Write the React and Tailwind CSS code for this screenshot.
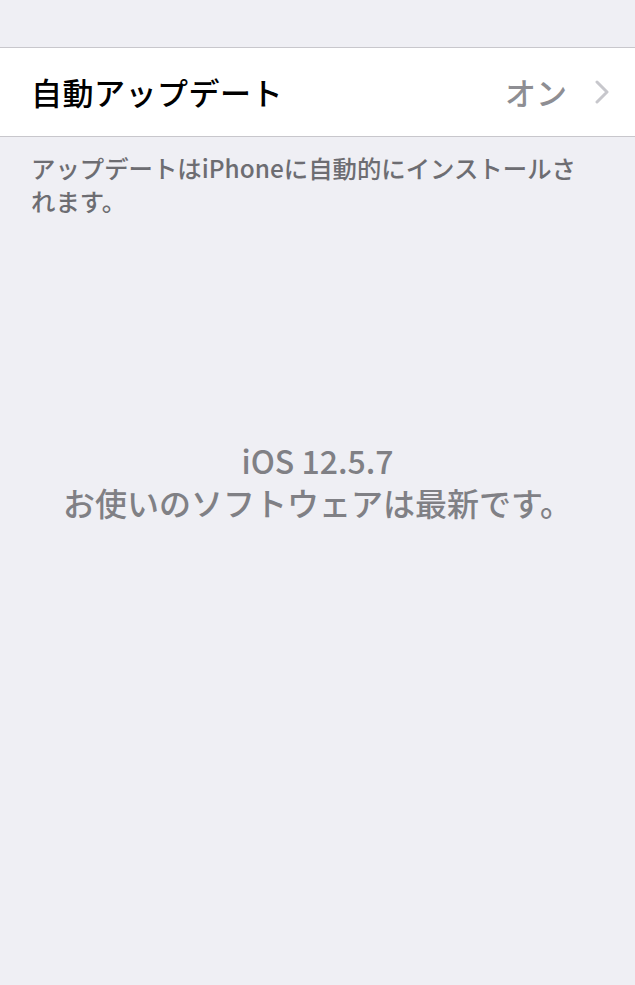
import React from 'react';

const font = { fontFamily: '"Noto Sans CJK JP", "Noto Sans", sans-serif' };

const Chevron = () => (
  <svg width="14" height="24" viewBox="0 0 14 24" fill="none">
    <path d="M2 2l10 10L2 22" stroke="#c7c7cc" strokeWidth="3" strokeLinecap="round" strokeLinejoin="round" />
  </svg>
);

export default function App() {
  return (
    <div className="w-[635px] h-[985px] bg-[#efeff4] flex flex-col" style={font}>
      <div className="h-[47px]" />
      <div className="bg-white border-y border-[#c8c7cc] h-[90px] flex items-center pl-[31px] pr-[26px]">
        <span className="text-[31px] text-black font-medium tracking-[0.5px]">自動アップデート</span>
        <span className="ml-auto text-[31px] text-[#8e8e93] font-medium">オン</span>
        <span className="ml-[28px] flex items-center"><Chevron /></span>
      </div>
      <p className="pl-[31px] pr-[42px] pt-[14px] text-[24.4px] leading-[33px] text-[#6d6d72] font-medium">
        アップデートはiPhoneに自動的にインストールされます。
      </p>
      <div className="mt-[222px] flex flex-col items-center text-[32px] leading-[42px] text-[#808085] font-medium">
        <span>iOS 12.5.7</span>
        <span>お使いのソフトウェアは最新です。</span>
      </div>
    </div>
  );
}
